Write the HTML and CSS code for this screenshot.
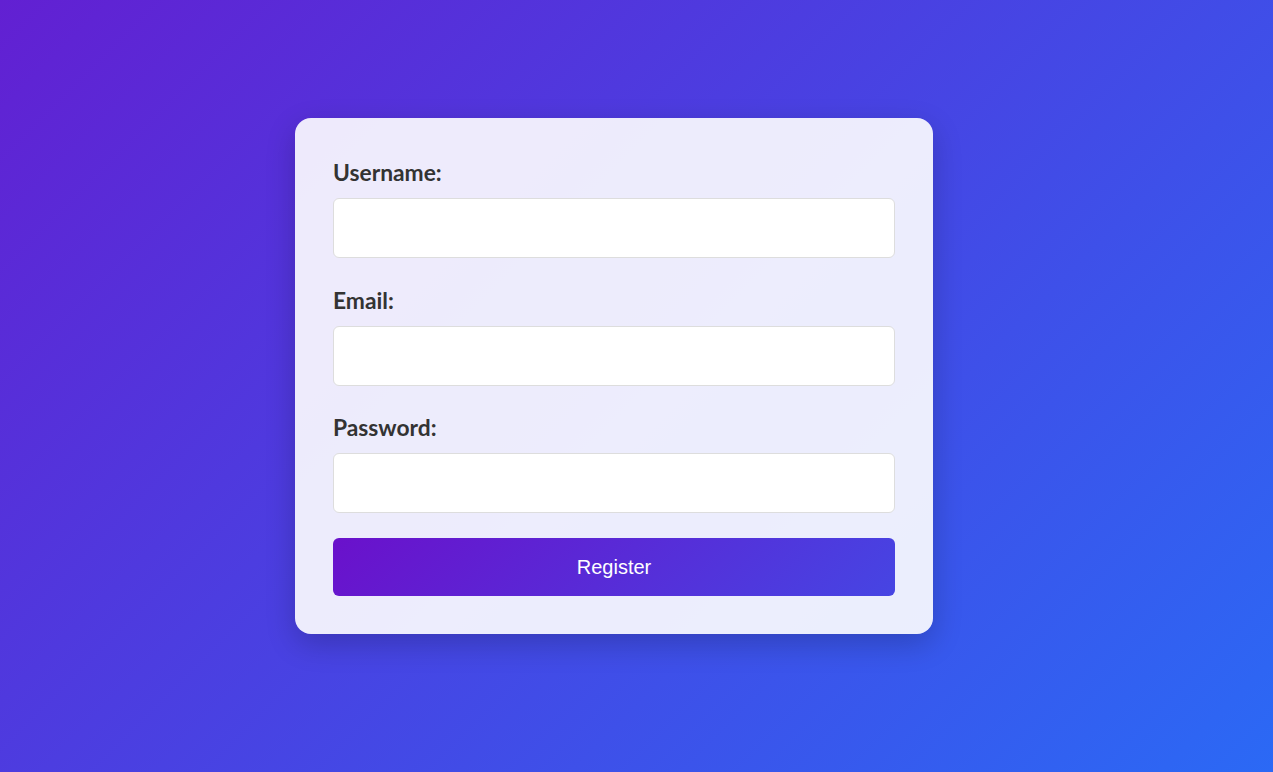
FILE: index.html
```html
<!DOCTYPE html>
<html lang="en">
<head>
<meta charset="utf-8">
<title>Register</title>
<link rel="stylesheet" href="styles.css">
</head>
<body>
  <main class="stage">
    <form class="card">
      <div class="field">
        <label class="label" for="username">Username:</label>
        <input class="input" id="username" type="text">
      </div>
      <div class="field">
        <label class="label" for="email">Email:</label>
        <input class="input" id="email" type="email">
      </div>
      <div class="field">
        <label class="label" for="password">Password:</label>
        <input class="input" id="password" type="password">
      </div>
      <button class="btn" type="button">Register</button>
    </form>
  </main>
</body>
</html>
```
FILE: styles.css
```css
* { box-sizing: border-box; }
html, body { margin: 0; height: 100%; }
body {
  background: linear-gradient(135deg, #6220d2 0%, #2b69f5 100%);
  font-family: Lato, "Noto Sans", sans-serif;
}
.stage {
  min-height: 100vh;
  display: flex;
  justify-content: center;
  align-items: center;
  padding: 0 45px 20px 0;
}
.card {
  width: 638px;
  background: rgba(255, 255, 255, 0.9);
  border-radius: 16px;
  padding: 40px 38px 38px;
  box-shadow: 0 10px 30px rgba(0, 0, 0, 0.2);
}
.field {
  display: flex;
  flex-direction: column;
  margin-bottom: 27.5px;
}
.field:last-of-type { margin-bottom: 25px; }
.label {
  font-weight: 700;
  font-size: 22.8px;
  line-height: 28px;
  color: #333;
  margin-bottom: 12px;
}
.input {
  height: 60px;
  border: 1px solid #ddd;
  border-radius: 6px;
  background: #fff;
  padding: 0 16px;
  font-size: 18px;
}
.btn {
  display: block;
  width: 100%;
  height: 58px;
  border: none;
  border-radius: 6px;
  background: linear-gradient(135deg, #6a11cb 0%, #4645e3 100%);
  color: #fff;
  font-family: "Liberation Sans", Arial, sans-serif;
  font-size: 20px;
  cursor: pointer;
}
```
